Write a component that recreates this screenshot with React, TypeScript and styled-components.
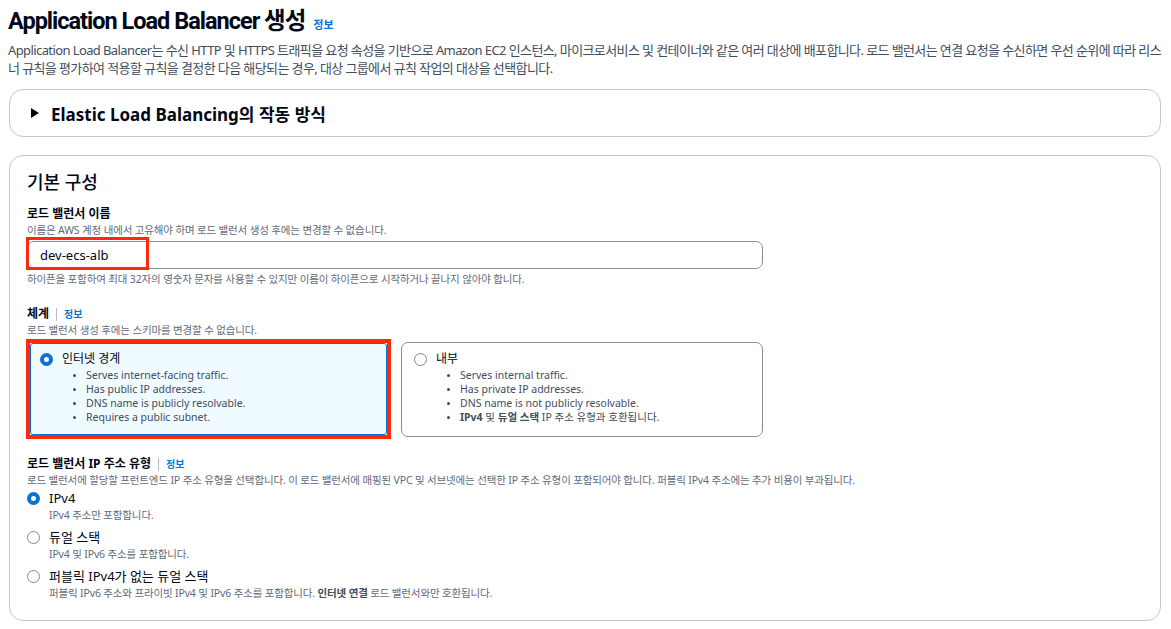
import { FC, ReactNode } from 'react';
import styled, { createGlobalStyle } from 'styled-components';

const GlobalStyle = createGlobalStyle`
  body {
    margin: 0;
    background: #ffffff;
    font-family: 'Noto Sans', 'Noto Sans CJK KR', sans-serif;
    color: #000716;
  }
  * { box-sizing: border-box; }
`;

const Page = styled.div`
  padding: 6px 10px 0 8px;
`;

const Title = styled.h1`
  margin: 0;
  font-family: Roboto, 'Noto Sans CJK KR', sans-serif;
  font-size: 23.5px;
  line-height: 30px;
  font-weight: 700;
  letter-spacing: -1px;
  display: flex;
  align-items: baseline;
  gap: 8px;
`;

const InfoLink = styled.a<{ $small?: boolean }>`
  color: #0972d3;
  font-family: 'Noto Sans', 'Noto Sans CJK KR', sans-serif;
  font-size: ${({ $small }) => ($small ? '10px' : '11px')};
  font-weight: 700;
  letter-spacing: 0;
  text-decoration: none;
`;

const Lead = styled.p`
  margin: 1px 0 0;
  font-size: 13px;
  line-height: 18px;
  color: #414d5c;
  letter-spacing: -0.6px;
  word-break: break-all;
`;

const Panel = styled.section<{ $top: number }>`
  margin: ${({ $top }) => $top}px 0 0 1px;
  border: 1px solid #c6c6cd;
  border-radius: 14px;
`;

const Expander = styled.div`
  height: 46px;
  display: flex;
  align-items: center;
  gap: 12px;
  padding-left: 21px;
  font-size: 17px;
  font-weight: 700;
`;

const Caret = styled.span`
  width: 0;
  height: 0;
  border-top: 5px solid transparent;
  border-bottom: 5px solid transparent;
  border-left: 8px solid #000716;
`;

const Body = styled.div`
  padding: 14px 17px 19px;
`;

const SectionTitle = styled.h2`
  margin: 0 0 12px;
  font-size: 18px;
  line-height: 24px;
  font-weight: 500;
`;

const Field = styled.div<{ $gap?: number }>`
  max-width: 736px;
  margin-bottom: ${({ $gap }) => $gap ?? 0}px;
`;

const Label = styled.div`
  display: flex;
  align-items: center;
  font-size: 12px;
  line-height: 16px;
  font-weight: 700;
`;

const Divider = styled.span`
  width: 1px;
  height: 13px;
  background: #b6bec9;
  margin: 0 7px;
`;

const Help = styled.div<{ $top?: number }>`
  font-size: 10.5px;
  line-height: 16px;
  color: #5f6b7a;
  margin-top: ${({ $top }) => $top ?? 0}px;
  letter-spacing: -0.15px;
  b { color: #414d5c; }
`;

const InputWrap = styled.div`
  position: relative;
  margin-top: 3px;
`;

const Input = styled.div`
  height: 28px;
  border: 1px solid #8c8c94;
  border-radius: 7px;
  padding-left: 12px;
  display: flex;
  align-items: center;
  font-size: 13px;
`;

/* red annotation box laid over the name input */
const Mark = styled.span`
  position: absolute;
  left: -1px;
  top: -4px;
  width: 123px;
  height: 33px;
  border: 3px solid #ff2a0a;
`;

const Tiles = styled.div`
  display: grid;
  grid-template-columns: 1fr 1fr;
  gap: 12px;
  margin-top: 2px;
  align-items: start;
`;

const Highlight = styled.div`
  margin: -1px -2px -3px -1px;
  border: 4px solid #ff2a0a;
`;

const Tile = styled.div<{ $on?: boolean }>`
  height: ${({ $on }) => ($on ? '92px' : '95px')};
  margin-top: ${({ $on }) => ($on ? '0' : '2px')};
  border: ${({ $on }) => ($on ? '1px solid #0972d3' : '1px solid #8c8c94')};
  background: ${({ $on }) => ($on ? '#f0fbff' : '#ffffff')};
  border-radius: ${({ $on }) => ($on ? '3px' : '7px')};
  padding: ${({ $on }) => ($on ? '7px 9px' : '8px 12px')};
`;

const RadioRow = styled.div`
  display: flex;
  align-items: center;
  gap: 9px;
  font-size: 12px;
  line-height: 16px;
`;

const Radio = styled.span<{ $on?: boolean }>`
  width: 13px;
  height: 13px;
  flex: none;
  border-radius: 50%;
  border: ${({ $on }) => ($on ? '4px solid #0972d3' : '1.5px solid #7d8998')};
  background: #ffffff;
`;

const Bullets = styled.ul`
  margin: 1px 0 0;
  padding-left: 46px;
  font-size: 10.5px;
  line-height: 14px;
  color: #414d5c;
  li::marker { font-size: 8px; }
  b { color: #414d5c; }
`;

const Options = styled.div`
  display: flex;
  flex-direction: column;
  gap: 6px;
  margin-top: 2px;
`;

const OptionTitle = styled.span`
  font-size: 13px;
`;

const OptionHelp = styled(Help)`
  padding-left: 22px;
  margin-top: 1px;
`;

const Choice: FC<{ on?: boolean; title: string; items: ReactNode[] }> = ({ on, title, items }) => {
  const tile = (
    <Tile $on={on}>
      <RadioRow>
        <Radio $on={on} />
        {title}
      </RadioRow>
      <Bullets>
        {items.map((it, i) => (
          <li key={i}>{it}</li>
        ))}
      </Bullets>
    </Tile>
  );
  return on ? <Highlight>{tile}</Highlight> : tile;
};

const IpOption: FC<{ on?: boolean; title: string; help: ReactNode }> = ({ on, title, help }) => (
  <div>
    <RadioRow>
      <Radio $on={on} />
      <OptionTitle>{title}</OptionTitle>
    </RadioRow>
    <OptionHelp>{help}</OptionHelp>
  </div>
);

const App: FC = () => (
  <Page>
    <GlobalStyle />
    <Title>
      Application Load Balancer 생성 <InfoLink>정보</InfoLink>
    </Title>
    <Lead>
      Application Load Balancer는 수신 HTTP 및 HTTPS 트래픽을 요청 속성을 기반으로 Amazon EC2 인스턴스, 마이크로서비스 및 컨테이너와 같은 여러
      대상에 배포합니다. 로드 밸런서는 연결 요청을 수신하면 우선 순위에 따라 리스너 규칙을 평가하여 적용할 규칙을 결정한 다음 해당되는 경우, 대상
      그룹에서 규칙 작업의 대상을 선택합니다.
    </Lead>

    <Panel $top={12}>
      <Expander>
        <Caret />
        Elastic Load Balancing의 작동 방식
      </Expander>
    </Panel>

    <Panel $top={18}>
      <Body>
        <SectionTitle>기본 구성</SectionTitle>

        <Field $gap={19}>
          <Label>로드 밸런서 이름</Label>
          <Help>이름은 AWS 계정 내에서 고유해야 하며 로드 밸런서 생성 후에는 변경할 수 없습니다.</Help>
          <InputWrap>
            <Input>dev-ecs-alb</Input>
            <Mark />
          </InputWrap>
          <Help $top={2}>하이픈을 포함하여 최대 32자의 영숫자 문자를 사용할 수 있지만 이름이 하이픈으로 시작하거나 끝나지 않아야 합니다.</Help>
        </Field>

        <Field $gap={19}>
          <Label>
            체계 <Divider /> <InfoLink $small>정보</InfoLink>
          </Label>
          <Help>로드 밸런서 생성 후에는 스키마를 변경할 수 없습니다.</Help>
          <Tiles>
            <Choice
              on
              title="인터넷 경계"
              items={[
                'Serves internet-facing traffic.',
                'Has public IP addresses.',
                'DNS name is publicly resolvable.',
                'Requires a public subnet.',
              ]}
            />
            <Choice
              title="내부"
              items={[
                'Serves internal traffic.',
                'Has private IP addresses.',
                'DNS name is not publicly resolvable.',
                <>
                  <b>IPv4</b> 및 <b>듀얼 스택</b> IP 주소 유형과 호환됩니다.
                </>,
              ]}
            />
          </Tiles>
        </Field>

        <div>
          <Label>
            로드 밸런서 IP 주소 유형 <Divider /> <InfoLink $small>정보</InfoLink>
          </Label>
          <Help>
            로드 밸런서에 할당할 프런트엔드 IP 주소 유형을 선택합니다. 이 로드 밸런서에 매핑된 VPC 및 서브넷에는 선택한 IP 주소 유형이 포함되어야
            합니다. 퍼블릭 IPv4 주소에는 추가 비용이 부과됩니다.
          </Help>
          <Options>
            <IpOption on title="IPv4" help="IPv4 주소만 포함합니다." />
            <IpOption title="듀얼 스택" help="IPv4 및 IPv6 주소를 포함합니다." />
            <IpOption
              title="퍼블릭 IPv4가 없는 듀얼 스택"
              help={
                <>
                  퍼블릭 IPv6 주소와 프라이빗 IPv4 및 IPv6 주소를 포함합니다. <b>인터넷 연결</b> 로드 밸런서와만 호환됩니다.
                </>
              }
            />
          </Options>
        </div>
      </Body>
    </Panel>
  </Page>
);

export default App;
